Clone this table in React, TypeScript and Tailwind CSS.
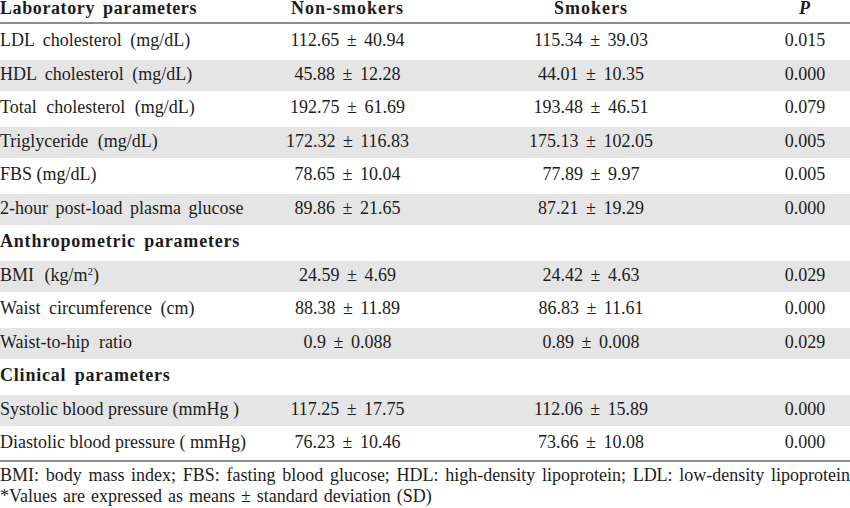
import React from "react";

type Row = {
  label: React.ReactNode;
  ws: string;
  non?: string;
  smk?: string;
  p?: string;
  section?: boolean;
  shaded?: boolean;
};

const rows: Row[] = [
  { label: "LDL cholesterol (mg/dL)", ws: "[word-spacing:4px]", non: "112.65 ± 40.94", smk: "115.34 ± 39.03", p: "0.015" },
  { label: "HDL cholesterol (mg/dL)", ws: "[word-spacing:4px]", non: "45.88 ± 12.28", smk: "44.01 ± 10.35", p: "0.000", shaded: true },
  { label: "Total cholesterol (mg/dL)", ws: "[word-spacing:5px]", non: "192.75 ± 61.69", smk: "193.48 ± 46.51", p: "0.079" },
  { label: "Triglyceride (mg/dL)", ws: "[word-spacing:5px]", non: "172.32 ± 116.83", smk: "175.13 ± 102.05", p: "0.005", shaded: true },
  { label: "FBS (mg/dL)", ws: "[word-spacing:0px]", non: "78.65 ± 10.04", smk: "77.89 ± 9.97", p: "0.005" },
  { label: "2-hour post-load plasma glucose", ws: "[word-spacing:3px]", non: "89.86 ± 21.65", smk: "87.21 ± 19.29", p: "0.000", shaded: true },
  { label: "Anthropometric parameters", ws: "[word-spacing:3px]", section: true },
  {
    label: (
      <>
        BMI (kg/m<sup className="text-[11px]">2</sup>)
      </>
    ),
    ws: "[word-spacing:6px]",
    non: "24.59 ± 4.69",
    smk: "24.42 ± 4.63",
    p: "0.029",
    shaded: true,
  },
  { label: "Waist circumference (cm)", ws: "[word-spacing:4px]", non: "88.38 ± 11.89", smk: "86.83 ± 11.61", p: "0.000" },
  { label: "Waist-to-hip ratio", ws: "[word-spacing:5px]", non: "0.9 ± 0.088", smk: "0.89 ± 0.008", p: "0.029", shaded: true },
  { label: "Clinical parameters", ws: "[word-spacing:3px]", section: true },
  { label: "Systolic blood pressure (mmHg )", ws: "[word-spacing:0px]", non: "117.25 ± 17.75", smk: "112.06 ± 15.89", p: "0.000", shaded: true },
  { label: "Diastolic blood pressure ( mmHg)", ws: "[word-spacing:0px]", non: "76.23 ± 10.46", smk: "73.66 ± 10.08", p: "0.000" },
];

const cols = "grid grid-cols-[245px_205px_282px_118px]";

export default function App() {
  return (
    <div className="w-[850px] h-[508px] overflow-hidden bg-white text-[18px] text-[#1c1c1c] font-['Liberation_Serif','Times_New_Roman',serif]">
      <div className={`${cols} h-[22px] items-start leading-[16px] font-bold tracking-[1px]`}>
        <div className="tracking-[0.6px] [word-spacing:3px]">Laboratory parameters</div>
        <div className="text-center">Non-smokers</div>
        <div className="text-center">Smokers</div>
        <div className="pl-[28px] text-center italic">P</div>
      </div>
      <div className="h-[2px] bg-[#8c8c8c]" />

      {rows.map((r, i) => (
        <div
          key={i}
          className={`${cols} h-[33.5px] items-start leading-[28px] border-t-2 border-white ${r.shaded ? "bg-[#e5e5e5]" : "bg-white"}`}
        >
          {r.section ? (
            <div className={`col-span-4 font-bold tracking-[0.8px] ${r.ws}`}>{r.label}</div>
          ) : (
            <>
              <div className={`whitespace-nowrap ${r.ws}`}>{r.label}</div>
              <div className="text-center [word-spacing:3px]">{r.non}</div>
              <div className="text-center [word-spacing:3px]">{r.smk}</div>
              <div className="pl-[28px] text-center">{r.p}</div>
            </>
          )}
        </div>
      ))}

      <div className="h-[2px] bg-[#8c8c8c]" />
      <div className="pt-[3px] leading-[21px]">
        <p className="text-justify [text-align-last:justify]">
          BMI: body mass index; FBS: fasting blood glucose; HDL: high-density lipoprotein; LDL: low-density lipoprotein
        </p>
        <p className="[word-spacing:1.5px]">*Values are expressed as means ± standard deviation (SD)</p>
      </div>
    </div>
  );
}
